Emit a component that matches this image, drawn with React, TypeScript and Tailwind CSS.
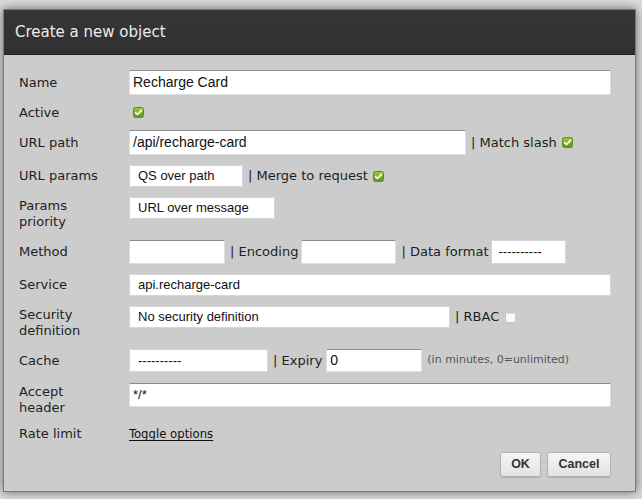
import type { ReactNode } from 'react';

function Check({ on = true }: { on?: boolean }) {
  if (!on) {
    return (
      <span className="inline-block w-[11px] h-[11px] rounded-[2px] bg-[#fafafa] border border-[#c6c6c6] shadow-[inset_0_1px_1px_rgba(0,0,0,0.08)]" />
    );
  }
  return (
    <svg width="11" height="11" viewBox="0 0 11 11" className="inline-block">
      <defs>
        <linearGradient id="cg" x1="0" y1="0" x2="0" y2="1">
          <stop offset="0" stopColor="#9ccd45" />
          <stop offset="1" stopColor="#5d9318" />
        </linearGradient>
      </defs>
      <rect x="0.5" y="0.5" width="10" height="10" rx="2" fill="url(#cg)" stroke="#5a8a1c" />
      <path d="M2.6 5.6 L4.5 7.5 L8.4 3.4" fill="none" stroke="#fff" strokeWidth="1.6" strokeLinecap="round" strokeLinejoin="round" />
    </svg>
  );
}

// text field with the darker top edge
function Field({ value = '', w, h = 'h-[22px]', small = false }: { value?: string; w: string; h?: string; small?: boolean }) {
  return (
    <div
      className={`${w} ${h} shrink-0 bg-white border border-[#dedede] border-t-[#8c8c8c] flex items-center pl-[3px] font-['Liberation_Sans',Arial,sans-serif] text-[#111] ${small ? 'text-[13px]' : 'text-[14px]'}`}
    >
      {value}
    </div>
  );
}

// select-like box, no arrow
function Pick({ value = '', w, h = 'h-[22px]', pl = 'pl-[8px]' }: { value?: string; w: string; h?: string; pl?: string }) {
  return (
    <div
      className={`${w} ${h} shrink-0 bg-white border border-[#d6d6d6] flex items-center ${pl} font-['Liberation_Sans',Arial,sans-serif] text-[13px] text-[#111]`}
    >
      {value}
    </div>
  );
}

function Sep({ children, className = 'mr-[6px]' }: { children: ReactNode; className?: string }) {
  return <span className={`ml-[5px] whitespace-nowrap ${className}`}>| {children}</span>;
}

function Row({ label, top = false, children, className = '' }: { label: ReactNode; top?: boolean; children: ReactNode; className?: string }) {
  return (
    <div className={`flex ${top ? 'items-start' : 'items-center'} ${className}`}>
      <div className={`w-[110px] shrink-0 leading-[16px] ${top ? 'pt-[1px]' : ''}`}>{label}</div>
      <div className="flex items-center">{children}</div>
    </div>
  );
}

export default function App() {
  return (
    <div className="w-[642px] h-[499px] bg-[#dcdcdc] pt-[9px] pl-[3px] overflow-hidden font-['DejaVu_Sans',Verdana,sans-serif]">
      <div className="w-[633px] h-[483px] border border-[#7a7a7a] shadow-[0_0_10px_rgba(0,0,0,0.55)] bg-[#cccccc] flex flex-col">
        {/* Header */}
        <div className="h-[45px] shrink-0 bg-gradient-to-b from-[#363636] to-[#303030] border-b border-[#222] flex items-center pl-[11px] text-[15px] text-[#ececec]">
          Create a new object
        </div>

        {/* Form */}
        <div className="ml-[15px] w-[592px] pt-[15px] flex flex-col gap-[10px] text-[13px] text-[#1e1e1e]">
          <Row label="Name">
            <Field value="Recharge Card" w="w-[482px]" h="h-[25px]" />
          </Row>

          <Row label="Active" className="h-[15px]">
            <span className="ml-[4px] flex"><Check /></span>
          </Row>

          <Row label="URL path">
            <Field value="/api/recharge-card" w="w-[337px]" h="h-[25px]" />
            <Sep className="mr-[5px]">Match slash</Sep>
            <Check />
          </Row>

          <Row label="URL params">
            <Pick value="QS over path" w="w-[114px]" />
            <Sep className="mr-[5px]">Merge to request</Sep>
            <Check />
          </Row>

          <Row label={<>Params<br />priority</>} top>
            <Pick value="URL over message" w="w-[146px]" />
          </Row>

          <Row label="Method">
            <Field w="w-[96px]" h="h-[24px]" />
            <Sep className="mr-[3px]">Encoding</Sep>
            <Field w="w-[95px]" h="h-[24px]" />
            <Sep className="mr-[2px]">Data format</Sep>
            <Pick value="----------" w="w-[75px]" h="h-[24px]" pl="pl-[7px]" />
          </Row>

          <Row label="Service">
            <Pick value="api.recharge-card" w="w-[482px]" />
          </Row>

          <Row label={<>Security<br />definition</>} top>
            <div className="flex items-center">
              <Pick value="No security definition" w="w-[321px]" />
              <Sep>RBAC</Sep>
              <Check on={false} />
            </div>
          </Row>

          <Row label="Cache">
            <Pick value="----------" w="w-[139px]" h="h-[23px]" />
            <Sep className="mr-[4px]">Expiry</Sep>
            <Field value="0" w="w-[96px]" h="h-[23px]" />
            <span className="ml-[5px] text-[11px] text-[#555]">(in minutes, 0=unlimited)</span>
          </Row>

          <Row label={<>Accept<br />header</>} top className="mt-[1px]">
            <Field value="*/*" w="w-[482px]" h="h-[24px]" small />
          </Row>

          <Row label="Rate limit" className="h-[16px]">
            <span className="underline underline-offset-2 text-[#111] font-['DejaVu_Sans_Condensed','Liberation_Sans',sans-serif]">
              Toggle options
            </span>
          </Row>

          <div className="flex justify-end gap-[6px] font-['Liberation_Sans',Arial,sans-serif] text-[12.5px] font-bold text-[#333]">
            <button className="w-[41px] h-[25px] rounded-[3px] border border-[#b4b4b4] bg-gradient-to-b from-[#f6f6f6] to-[#e2e2e2] shadow-[0_1px_1px_rgba(0,0,0,0.15)]">
              OK
            </button>
            <button className="w-[64px] h-[25px] rounded-[3px] border border-[#b4b4b4] bg-gradient-to-b from-[#f6f6f6] to-[#e2e2e2] shadow-[0_1px_1px_rgba(0,0,0,0.15)]">
              Cancel
            </button>
          </div>
        </div>
      </div>
    </div>
  );
}
